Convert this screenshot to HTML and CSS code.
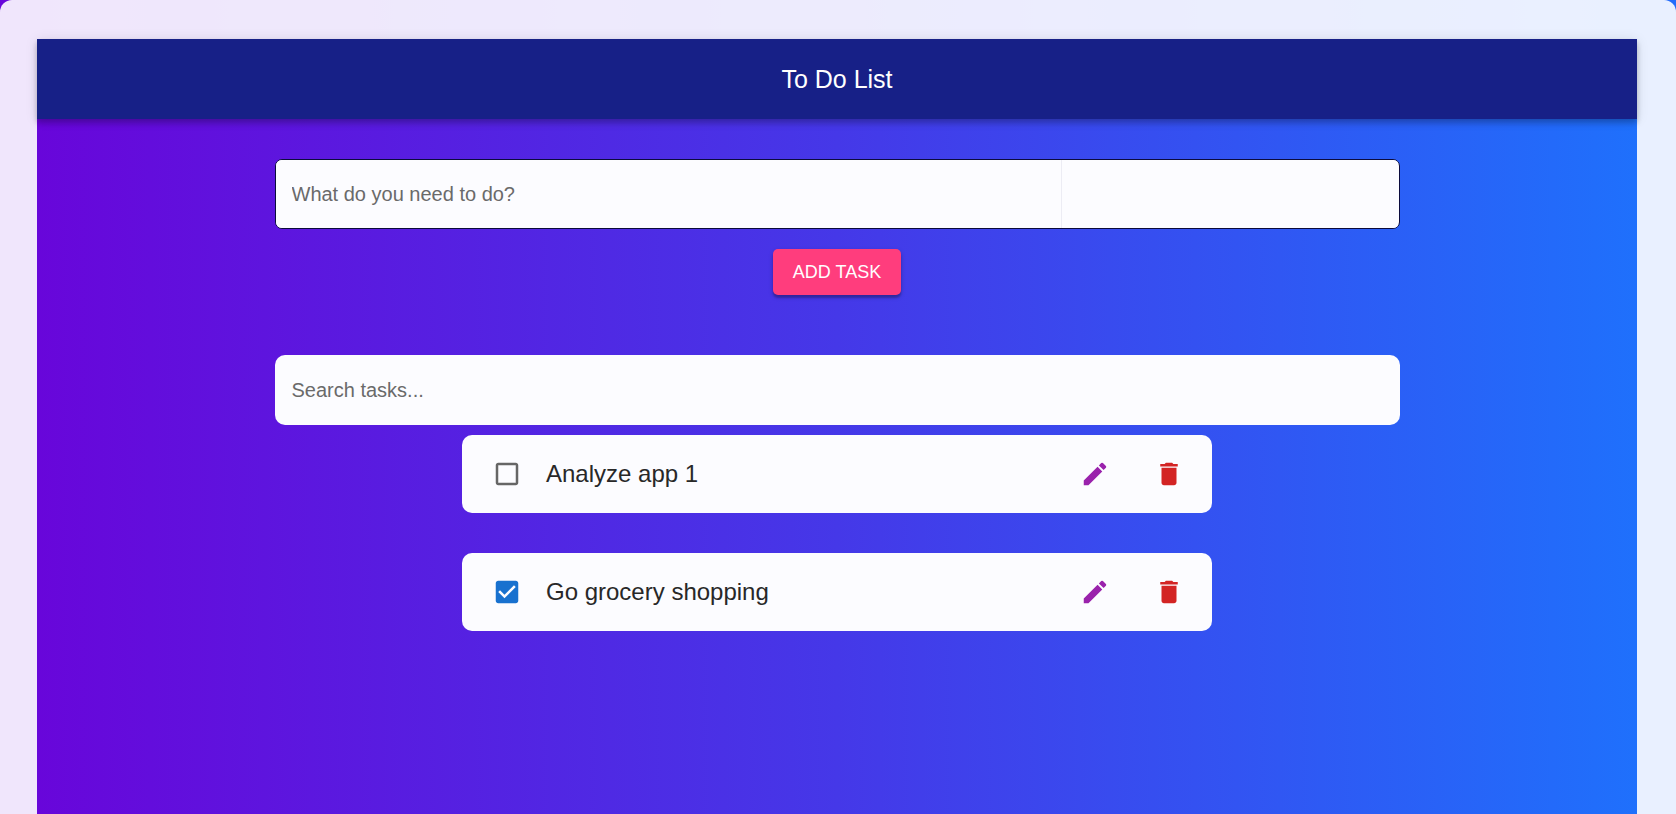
FILE: index.html
```html
<!DOCTYPE html>
<html lang="en">
<head>
<meta charset="utf-8">
<meta name="viewport" content="width=device-width, initial-scale=1">
<title>To Do List</title>
<link rel="stylesheet" href="styles.css">
</head>
<body>
<svg class="sprite" aria-hidden="true">
  <symbol id="edit" viewBox="0 0 24 24"><path d="M3 17.25V21h3.75L17.81 9.94l-3.75-3.75L3 17.25zM20.71 7.04c.39-.39.39-1.02 0-1.41l-2.34-2.34a.9959.9959 0 0 0-1.41 0l-1.83 1.83 3.75 3.75 1.83-1.83z"/></symbol>
  <symbol id="delete" viewBox="0 0 24 24"><path d="M6 19c0 1.1.9 2 2 2h8c1.100 0 2-.9 2-2V7H6v12zM19 4h-3.500l-1-1h-5l-1 1H5v2h14V4z"/></symbol>
  <symbol id="box" viewBox="0 0 24 24"><path d="M19 5v14H5V5h14m0-2H5c-1.100 0-2 .9-2 2v14c0 1.100.9 2 2 2h14c1.100 0 2-.9 2-2V5c0-1.100-.9-2-2-2z"/></symbol>
  <symbol id="box-checked" viewBox="0 0 24 24"><path d="M19 3H5c-1.110 0-2 .9-2 2v14c0 1.100.89 2 2 2h14c1.110 0 2-.9 2-2V5c0-1.100-.89-2-2-2zm-9 14l-5-5 1.410-1.410L10 14.170l7.590-7.590L19 8l-9 9z"/></symbol>
</svg>
<div class="frame">
  <div class="app">
    <header class="bar"><h1 class="title">To Do List</h1></header>
    <main class="content">
      <form class="add-form">
        <div class="add-field">
          <input class="field task-input" type="text" placeholder="What do you need to do?" aria-label="What do you need to do?">
          <input class="field detail-input" type="text" aria-label="Task details">
        </div>
        <button class="add-button" type="button">ADD TASK</button>
      </form>
      <input class="field search" type="search" placeholder="Search tasks..." aria-label="Search tasks">
      <ul class="tasks">
        <li class="task">
          <label class="task-label">
            <span class="check">
              <input class="check-input" type="checkbox">
              <svg class="icon off"><use href="#box"/></svg>
              <svg class="icon on"><use href="#box-checked"/></svg>
            </span>
            <span class="task-name">Analyze app 1</span>
          </label>
          <button class="icon-button edit" type="button" aria-label="Edit Analyze app 1"><svg class="icon"><use href="#edit"/></svg></button>
          <button class="icon-button delete" type="button" aria-label="Delete Analyze app 1"><svg class="icon"><use href="#delete"/></svg></button>
        </li>
        <li class="task">
          <label class="task-label">
            <span class="check">
              <input class="check-input" type="checkbox" checked>
              <svg class="icon off"><use href="#box"/></svg>
              <svg class="icon on"><use href="#box-checked"/></svg>
            </span>
            <span class="task-name">Go grocery shopping</span>
          </label>
          <button class="icon-button edit" type="button" aria-label="Edit Go grocery shopping"><svg class="icon"><use href="#edit"/></svg></button>
          <button class="icon-button delete" type="button" aria-label="Delete Go grocery shopping"><svg class="icon"><use href="#delete"/></svg></button>
        </li>
      </ul>
    </main>
  </div>
</div>
</body>
</html>
```

FILE: styles.css
```css
* {
  box-sizing: border-box;
}

body {
  margin: 0;
  font-family: "Liberation Sans", Arial, sans-serif;
  background: linear-gradient(to right, #6806da, #246cfb);
}

.sprite {
  display: none;
}

.frame {
  display: flex;
  min-height: 100vh;
  padding: 39px 39px 0 37px;
  border-radius: 12px 12px 0 0;
  background: rgba(255, 255, 255, 0.9);
}

.app {
  flex: 1;
  min-width: 0;
  background: linear-gradient(to right, #6806da, #4538e8 50%, #1f70fc);
}

.bar {
  display: flex;
  align-items: center;
  justify-content: center;
  height: 80px;
  background: #172087;
  box-shadow: 0 3px 5px rgba(0, 0, 0, 0.14), 0 5px 6px rgba(0, 0, 0, 0.1), 0 1px 12px rgba(0, 0, 0, 0.1);
}

.title {
  margin: 0;
  color: #fff;
  font-size: 25px;
  font-weight: 400;
}

.content {
  display: flex;
  flex-direction: column;
  align-items: center;
  max-width: 1165px;
  margin: 0 auto;
  padding: 40px 20px;
}

.add-form {
  display: flex;
  flex-direction: column;
  align-items: center;
  gap: 20px;
  width: 100%;
  margin-bottom: 60px;
}

.add-field {
  display: flex;
  width: 100%;
  height: 70px;
  overflow: hidden;
  border: 1px solid #0b0b3c;
  border-radius: 7px;
  background: #fcfcff;
}

.field {
  min-width: 0;
  padding: 0 16px;
  border: 0;
  outline: 0;
  background: #fcfcff;
  color: #222;
  font: inherit;
  font-size: 20px;
}

.field::placeholder {
  color: #6a6a6a;
  opacity: 1;
}

.task-input {
  width: 70%;
  border-right: 1px solid #ececf4;
}

.detail-input {
  width: 30%;
}

.add-button {
  height: 46px;
  padding: 0 20px;
  border: 0;
  border-radius: 5px;
  background: #ff3d7d;
  box-shadow: 0 3px 2px rgba(0, 0, 0, 0.2), 0 2px 5px rgba(0, 0, 0, 0.2);
  color: #fff;
  font: inherit;
  font-size: 18px;
}

.search {
  width: 100%;
  height: 70px;
  padding: 0 17px;
  border-radius: 10px;
  appearance: none;
}

.tasks {
  display: flex;
  flex-direction: column;
  gap: 40px;
  width: 100%;
  max-width: 750px;
  margin: 10px 0 0;
  padding: 0;
  list-style: none;
}

.task {
  display: flex;
  align-items: center;
  gap: 20px;
  padding: 12px 16px 12px 18px;
  border-radius: 10px;
  background: #fcfcff;
}

.task-label {
  display: flex;
  flex: 1;
  align-items: center;
  gap: 12px;
}

.check {
  display: grid;
  padding: 12px;
  color: #666;
}

.check > * {
  grid-area: 1 / 1;
}

.check-input {
  width: 30px;
  height: 30px;
  margin: 0;
  opacity: 0;
}

.check .on,
.check-input:checked ~ .off {
  visibility: hidden;
}

.check-input:checked ~ .on {
  visibility: visible;
  color: #1871cf;
}

.task-name {
  color: #282828;
  font-size: 24px;
}

.icon {
  display: block;
  width: 30px;
  height: 30px;
  fill: currentColor;
  pointer-events: none;
}

.icon-button {
  padding: 12px;
  border: 0;
  background: none;
}

.edit {
  color: #9a22ac;
}

.delete {
  color: #d32424;
}
```
